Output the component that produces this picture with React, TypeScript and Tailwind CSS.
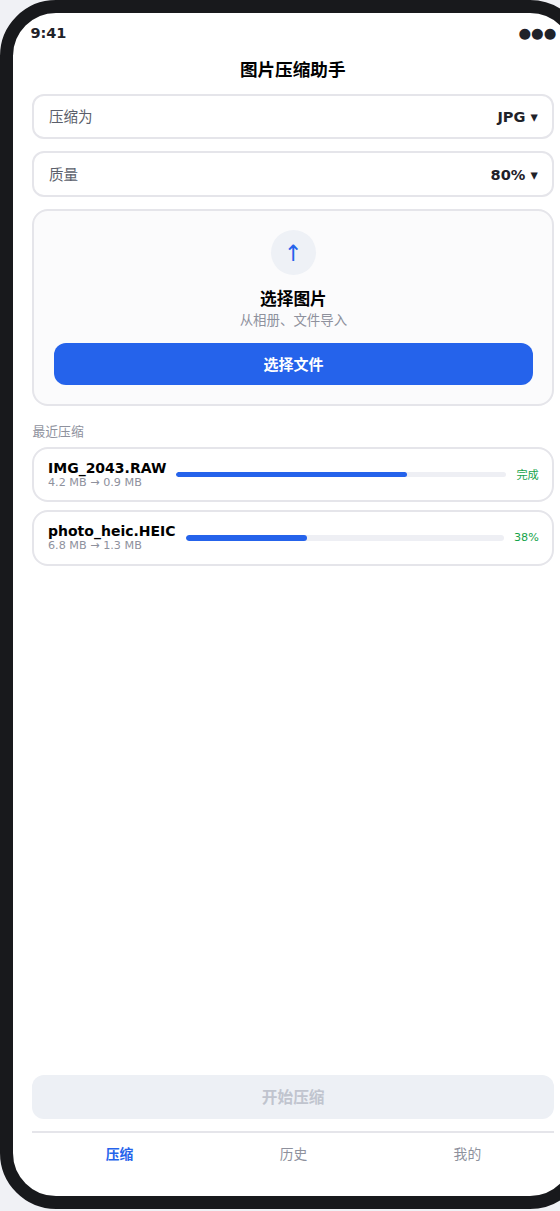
type SelectRowProps = { label: string; value: string; className: string };

function SelectRow({ label, value, className }: SelectRowProps) {
  return (
    <div className={`flex shrink-0 items-center justify-between rounded-[12px] border-2 border-[#e5e5ea] pr-[14.6px] pl-[15px] text-[14.56px] ${className}`}>
      <span className="text-[#5b5f6b]">{label}</span>
      <span className="font-bold text-[#1f2229]">{value} ▾</span>
    </div>
  );
}

type FileRowProps = {
  name: string;
  size: string;
  status: string;
  progress: number;
  className: string;
  barClassName: string;
  statusClassName: string;
};

function FileRow({ name, size, status, progress, className, barClassName, statusClassName }: FileRowProps) {
  return (
    <div className={`flex shrink-0 items-center gap-[10px] rounded-[16px] border-2 border-[#e5e5ea] pr-[13.6px] pl-[14px] ${className}`}>
      <div className="whitespace-nowrap">
        <div className="text-[14px] leading-[16px] font-bold text-black">{name}</div>
        <div className="text-[11.2px] leading-[13px] text-[#8e919d]">{size}</div>
      </div>
      <div className={`flex-1 overflow-hidden rounded-full bg-[#eeeff4] ${barClassName}`}>
        <div className="h-full rounded-full bg-[#2563eb]" style={{ width: `${progress}%` }} />
      </div>
      <div className={`text-[11.2px] leading-[14px] text-[#16a34a] ${statusClassName}`}>{status}</div>
    </div>
  );
}

export default function App() {
  return (
    <div className="h-[1211px] w-[560px] overflow-hidden bg-[#f0f1f5] font-['DejaVu_Sans','Noto_Sans_CJK_SC',sans-serif]">
      <div className="flex h-[1209px] w-[586.4px] flex-col rounded-[56px] border-[13px] border-[#18191c] bg-white">
        <div className="flex h-[41px] shrink-0 items-center justify-between pr-[17px] pl-[17.4px] text-[14.5px] font-bold text-[#1f2229]">
          <span>9:41</span>
          <span className="pt-px">●●●</span>
        </div>
        <div className="flex flex-1 flex-col px-[19px]">
          <h1 className="h-[40px] shrink-0 pr-px text-center text-[17.6px] leading-[32px] font-bold text-black">图片压缩助手</h1>
          <SelectRow label="压缩为" value="JPG" className="h-[45px]" />
          <SelectRow label="质量" value="80%" className="mt-[12px] h-[46px] pt-px" />
          <div className="mt-[12px] flex h-[197px] shrink-0 flex-col items-center rounded-[16px] border-2 border-[#e5e5ea] bg-[#fbfbfc] pt-[19px] pr-[19.6px] pl-5">
            <div className="flex size-[45px] items-center justify-center rounded-full bg-[#eef1f6] pt-[2px] text-[22.4px] text-[#2563eb]">↑</div>
            <div className="mt-[12px] text-[16.7px] leading-[24px] font-bold text-black">选择图片</div>
            <div className="-mt-px text-[13.44px] leading-[22px] text-[#8e919d]">从相册、文件导入</div>
            <button className="mt-[11px] h-[42px] w-full rounded-[12px] bg-[#2563eb] pt-[2px] text-[15px] font-bold text-white">选择文件</button>
          </div>
          <div className="mt-[16px] mb-[5px] pl-[0.5px] text-[12.8px] leading-[20px] text-[#8e919d]">最近压缩</div>
          <FileRow name="IMG_2043.RAW" size="4.2 MB → 0.9 MB" status="完成" progress={69.8} className="h-[55px]" barClassName="h-[5px]" statusClassName="pt-[2px]" />
          <FileRow name="photo_heic.HEIC" size="6.8 MB → 1.3 MB" status="38%" progress={38} className="mt-[8px] h-[56px] [&>:first-child]:pb-[2px]" barClassName="h-[6px]" statusClassName="" />
          <button className="mt-auto h-[44px] shrink-0 rounded-[12px] bg-[#edf0f5] pt-[2px] text-[15.68px] font-bold text-[#c0c4ce]">开始压缩</button>
          <nav className="mt-[12px] grid h-[65px] shrink-0 grid-cols-3 border-t-2 border-[#e5e5ea] pt-[11px] pl-[0.5px] text-center text-[13.8px] leading-[20px] text-[#8e919d]">
            <span className="font-bold text-[#2563eb]">压缩</span>
            <span>历史</span>
            <span>我的</span>
          </nav>
        </div>
      </div>
    </div>
  );
}
